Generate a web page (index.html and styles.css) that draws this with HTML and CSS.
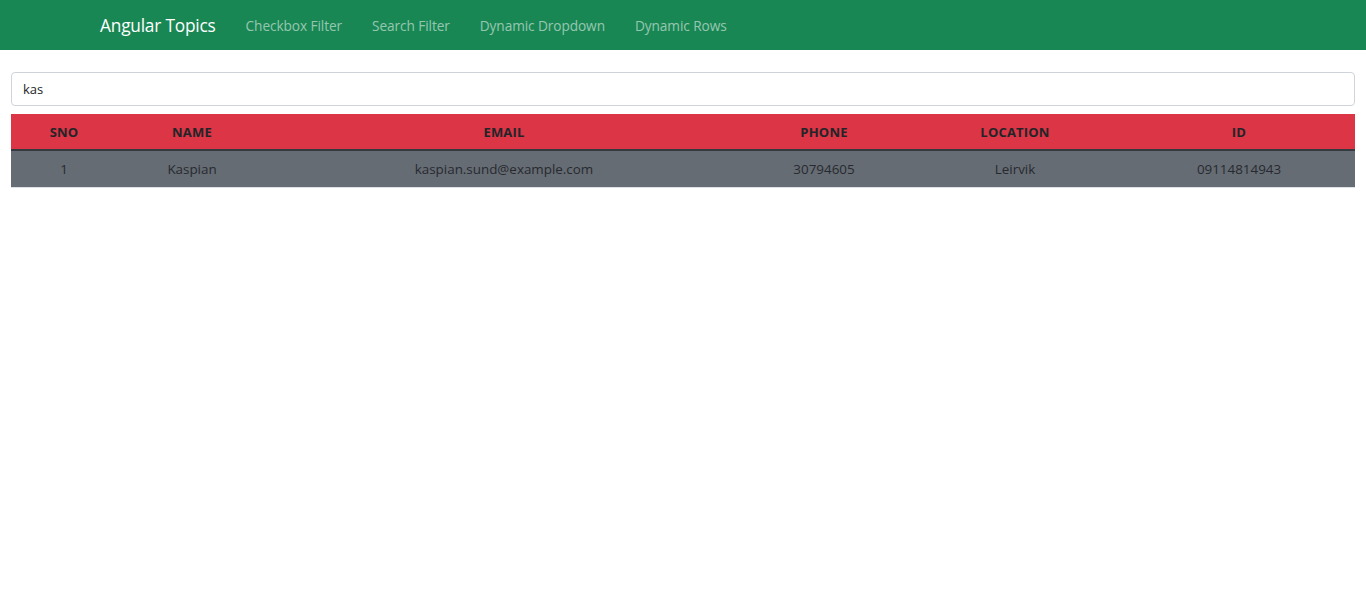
FILE: index.html
```html
<!DOCTYPE html>
<html>
<head>
<meta charset="utf-8">
<link rel="stylesheet" href="styles.css">
</head>
<body>
<nav class="navbar">
  <a class="brand">Angular Topics</a>
  <ul class="nav">
    <li><a class="nav-link">Checkbox Filter</a></li>
    <li><a class="nav-link">Search Filter</a></li>
    <li><a class="nav-link">Dynamic Dropdown</a></li>
    <li><a class="nav-link">Dynamic Rows</a></li>
  </ul>
</nav>
<main class="content">
  <input class="search" type="text" value="kas">
  <table class="grid">
    <colgroup>
      <col class="c1"><col class="c2"><col class="c3"><col class="c4"><col class="c5"><col class="c6">
    </colgroup>
    <thead>
      <tr><th>SNO</th><th>NAME</th><th>EMAIL</th><th>PHONE</th><th>LOCATION</th><th>ID</th></tr>
    </thead>
    <tbody>
      <tr><td>1</td><td>Kaspian</td><td>kaspian.sund@example.com</td><td>30794605</td><td>Leirvik</td><td>09114814943</td></tr>
    </tbody>
  </table>
</main>
</body>
</html>
```
FILE: styles.css
```css
* { box-sizing: border-box; }
body {
  margin: 0;
  font-family: "Open Sans", "Noto Sans", sans-serif;
  color: #212529;
  background: #fff;
}
.navbar {
  height: 50px;
  background: #198754;
  display: flex;
  align-items: center;
  padding-left: 100px;
}
.brand {
  color: #fff;
  font-size: 17.3px;
  margin-right: 15px;
  letter-spacing: -0.2px;
}
.nav {
  list-style: none;
  margin: 0;
  padding: 0;
  display: flex;
}
.nav-link {
  display: block;
  color: rgba(255, 255, 255, 0.55);
  font-size: 13.7px;
  padding: 0 15px;
  letter-spacing: -0.1px;
}
.content {
  padding: 22px 11px 0;
}
.search {
  display: block;
  width: 100%;
  height: 34px;
  border: 1px solid #ced4da;
  border-radius: 4px;
  padding: 0 11px;
  font-family: inherit;
  font-size: 13px;
  color: #212529;
  outline: none;
}
.grid {
  width: 100%;
  margin-top: 8px;
  border-collapse: collapse;
  table-layout: fixed;
  font-size: 13px;
}
.c1 { width: 106px; }
.c2 { width: 150px; }
.c3 { width: 474px; }
.c4 { width: 166px; }
.c5 { width: 216px; }
.c6 { width: 232px; }
.grid th {
  background: #dc3545;
  height: 36px;
  font-weight: 700;
  text-align: center;
  border-bottom: 2px solid #343a40;
  padding: 0;
  letter-spacing: 0.2px;
}
.grid td {
  background: #666c73;
  height: 37px;
  text-align: center;
  padding: 0;
  font-size: 13.4px;
  color: #262a30;
  border-bottom: 1px solid #dee2e6;
}
```
